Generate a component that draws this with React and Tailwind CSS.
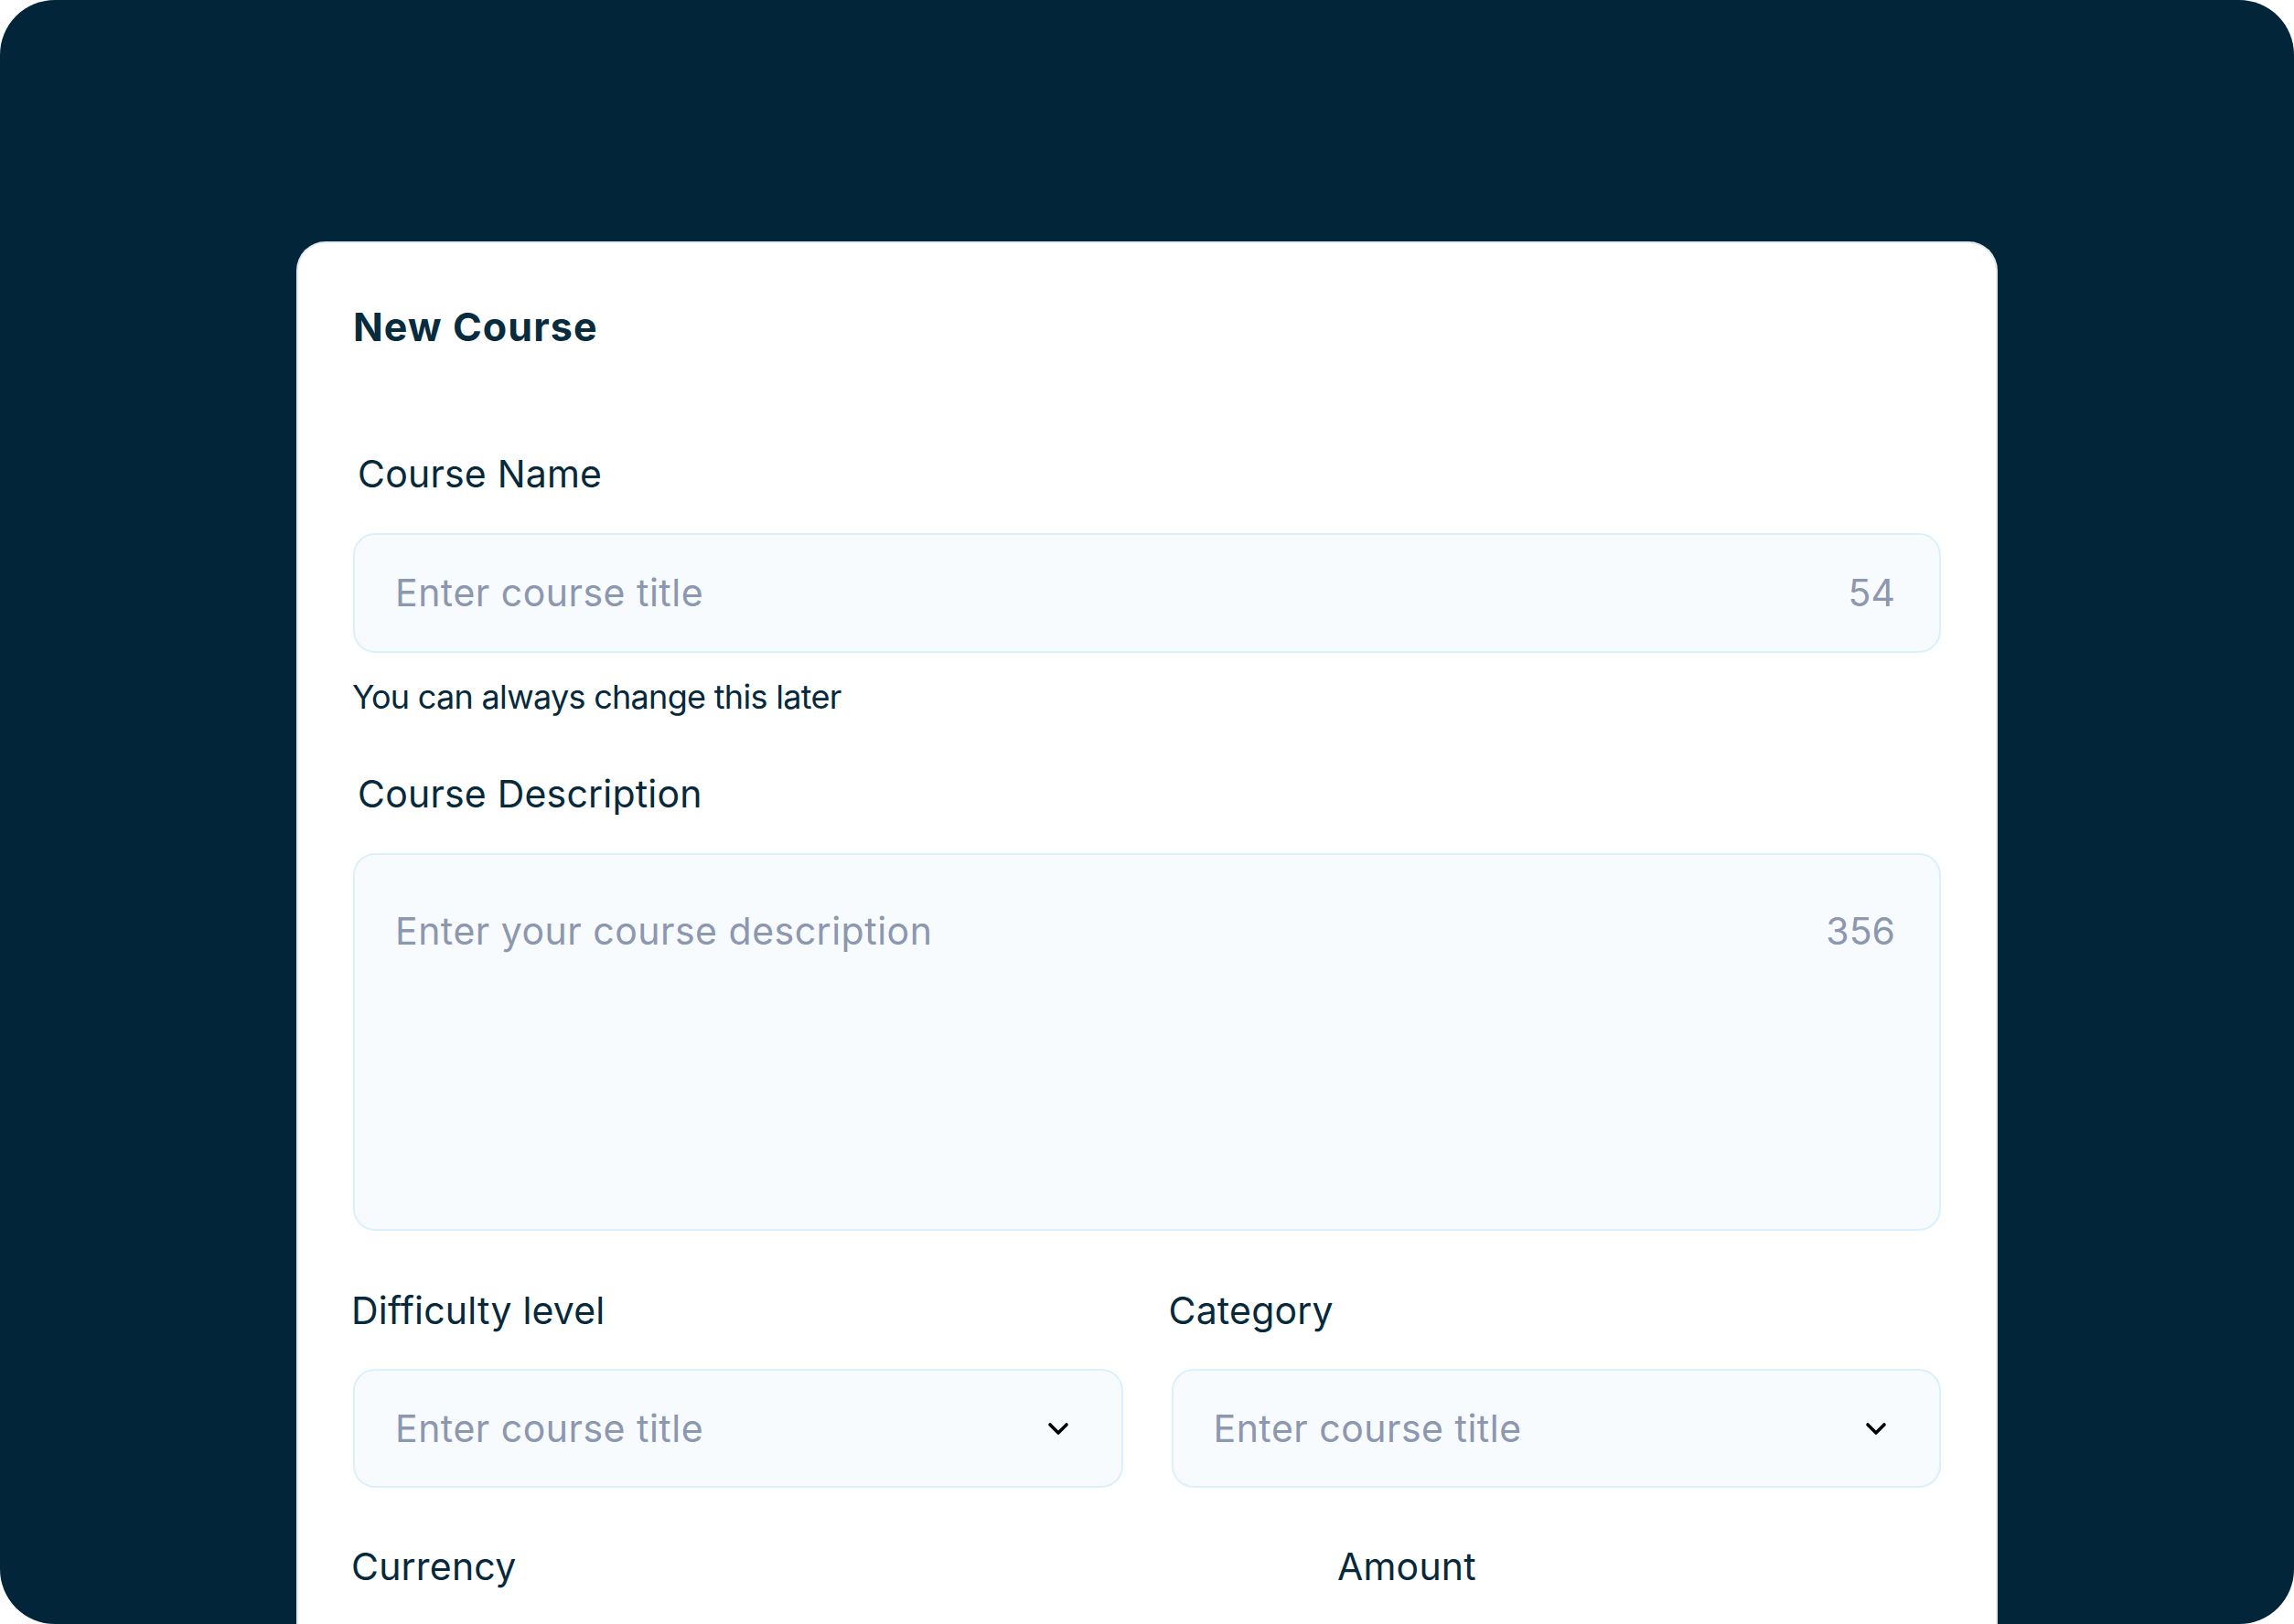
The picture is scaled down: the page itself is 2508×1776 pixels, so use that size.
import React from "react";

function Chevron() {
  return (
    <svg width="24" height="15" viewBox="0 0 24 15" fill="none" className="shrink-0">
      <path d="M3 3 L12 12 L21 3" stroke="#000000" strokeWidth="3.6" strokeLinecap="round" strokeLinejoin="round" />
    </svg>
  );
}

function Label({ children, className = "" }) {
  return (
    <div className={"text-[41px] leading-none text-[#06293b] tracking-[0.2px] " + className}>{children}</div>
  );
}

function SelectBox() {
  return (
    <div className="h-[130px] rounded-[24px] border-2 border-[#dbf0fd] bg-[#f8fbfe] flex items-center justify-between pl-[44px] pr-[57px]">
      <span className="text-[41px] leading-none text-[#8c97b0] tracking-[0.5px]">Enter course title</span>
      <Chevron />
    </div>
  );
}

export default function App() {
  return (
    <div className="w-[2508px] h-[1776px] bg-white font-['Inter','Noto_Sans',sans-serif]">
      <div className="w-full h-full rounded-[60px] bg-[#02253a] overflow-hidden pt-[264px] px-[324px]">
        <div className="h-[1600px] bg-white border-2 border-b-0 border-[#e2eaf1] rounded-t-[32px] px-[60px] pt-[70px]">
          <div className="text-[43px] leading-none font-bold text-[#062c3d] tracking-[1.1px]">New Course</div>

          <Label className="mt-[119px] pl-[5px]">Course Name</Label>
          <div className="mt-[44px] h-[131px] rounded-[24px] border-2 border-[#dbf0fd] bg-[#f8fbfe] flex items-center justify-between pl-[44px] pr-[48px]">
            <span className="text-[41px] leading-none text-[#8c97b0] tracking-[0.5px]">Enter course title</span>
            <span className="text-[41px] leading-none text-[#8c97b0]">54</span>
          </div>
          <div className="mt-[30px] text-[36px] leading-none text-[#06293b] tracking-[-0.7px] -ml-[1px]">You can always change this later</div>

          <Label className="mt-[68px] pl-[5px]">Course Description</Label>
          <div className="mt-[44px] h-[413px] rounded-[24px] border-2 border-[#dbf0fd] bg-[#f8fbfe] flex items-start justify-between pl-[44px] pr-[48px] pt-[63px]">
            <span className="text-[41px] leading-none text-[#8c97b0] tracking-[0.5px]">Enter your course description</span>
            <span className="text-[41px] leading-none text-[#8c97b0]">356</span>
          </div>

          <div className="mt-[67px] grid grid-cols-2 gap-x-[53px]">
            <div>
              <Label className="-ml-[2px]">Difficulty level</Label>
              <div className="mt-[43px]">
                <SelectBox />
              </div>
            </div>
            <div>
              <Label className="-ml-[3px]">Category</Label>
              <div className="mt-[43px]">
                <SelectBox />
              </div>
            </div>
          </div>

          <div className="mt-[66px] grid grid-cols-[1024px_1fr] gap-x-[54px]">
            <Label className="-ml-[2px]">Currency</Label>
            <Label className="-ml-[2px]">Amount</Label>
          </div>
        </div>
      </div>
    </div>
  );
}
